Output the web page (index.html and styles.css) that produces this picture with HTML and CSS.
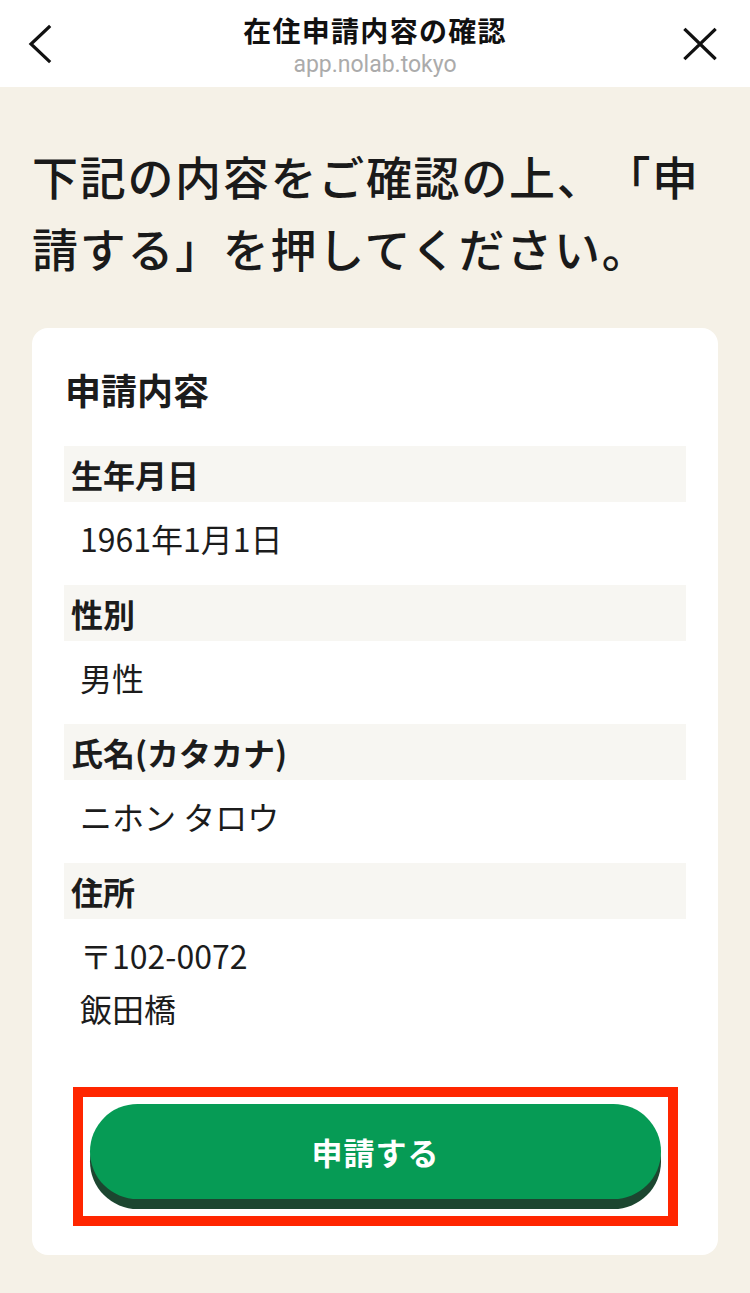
FILE: index.html
```html
<!DOCTYPE html>
<html lang="ja">
<head>
<meta charset="utf-8">
<title>在住申請内容の確認</title>
<link rel="stylesheet" href="styles.css">
</head>
<body>
<header class="topbar">
  <div class="topbar-left">
    <svg class="icon-back" width="24" height="40" viewBox="0 0 24 40" aria-hidden="true">
      <path d="M21 3 L3 20 L21 37" fill="none" stroke="#111" stroke-width="3.2" stroke-linecap="square" stroke-linejoin="miter"/>
    </svg>
  </div>
  <div class="topbar-title">
    <div class="title">在住申請内容の確認</div>
    <div class="url">app.nolab.tokyo</div>
  </div>
  <div class="topbar-right">
    <svg class="icon-close" width="36" height="36" viewBox="0 0 36 36" aria-hidden="true">
      <path d="M3.5 4 L32.5 32 M32.5 4 L3.5 32" fill="none" stroke="#111" stroke-width="3.2" stroke-linecap="square"/>
    </svg>
  </div>
</header>
<main class="main">
  <h1 class="headline">下記の内容をご確認の上、「申請する」を押してください。</h1>
  <section class="card">
    <h2 class="card-title">申請内容</h2>
    <div class="field">
      <div class="field-label">生年月日</div>
      <div class="field-value">1961年1月1日</div>
    </div>
    <div class="field">
      <div class="field-label">性別</div>
      <div class="field-value">男性</div>
    </div>
    <div class="field">
      <div class="field-label">氏名(カタカナ)</div>
      <div class="field-value">ニホン タロウ</div>
    </div>
    <div class="field">
      <div class="field-label">住所</div>
      <div class="field-value">〒102-0072<br>飯田橋</div>
    </div>
    <div class="highlight">
      <button class="submit" type="button">申請する</button>
    </div>
  </section>
</main>
</body>
</html>
```
FILE: styles.css
```css
* { box-sizing: border-box; }

html, body {
  margin: 0;
  padding: 0;
}

body {
  background: #f5f1e7;
  font-family: "Noto Sans CJK JP", "Noto Sans", sans-serif;
  color: #1c1c1c;
  text-spacing-trim: space-all;
}

.topbar {
  background: #ffffff;
  height: 87px;
  display: grid;
  grid-template-columns: 1fr auto 1fr;
  align-items: center;
}

.topbar-left {
  padding-left: 28px;
  display: flex;
}

.topbar-right {
  padding-right: 32px;
  display: flex;
  justify-content: flex-end;
}

.icon-back, .icon-close { display: block; }

.topbar-title {
  align-self: start;
  padding-top: 12px;
  text-align: center;
}

.title {
  font-size: 28px;
  line-height: 36px;
  font-weight: 700;
  letter-spacing: 1.3px;
  color: #111;
}

.url {
  margin-top: 4px;
  font-family: Roboto, "Noto Sans", sans-serif;
  font-size: 23px;
  line-height: 26px;
  color: #ababab;
}

.main {
  padding: 0 32px 40px;
}

.headline {
  margin: 52px 0 45px;
  font-size: 46px;
  line-height: 72px;
  font-weight: 500;
  letter-spacing: 1.7px;
  color: #1a1a1a;
}

.card {
  background: #ffffff;
  border-radius: 16px;
  padding: 36px 32px 29px;
}

.card-title {
  margin: 0 0 32px 1px;
  font-size: 36px;
  line-height: 50px;
  font-weight: 700;
  color: #1c1c1c;
}

.field-label {
  background: #f7f6f2;
  height: 56px;
  padding-left: 7px;
  font-size: 32px;
  line-height: 56px;
  font-weight: 700;
  color: #1c1c1c;
}

.field-value {
  padding: 10px 16px 20px;
  font-size: 32px;
  line-height: 53px;
  font-weight: 400;
  color: #1c1c1c;
}

.highlight {
  margin: 32px 8px 0 9px;
  border: 10px solid #ff2600;
  padding: 7px;
}

.submit {
  display: block;
  width: 100%;
  height: 95px;
  margin-bottom: 10px;
  border: none;
  border-radius: 48px;
  background: #069b55;
  box-shadow: 0 10px 0 #1c4630;
  color: #ffffff;
  font-family: "Noto Sans CJK JP", "Noto Sans", sans-serif;
  font-size: 31px;
  font-weight: 700;
  letter-spacing: 1px;
  padding: 0;
}
```
